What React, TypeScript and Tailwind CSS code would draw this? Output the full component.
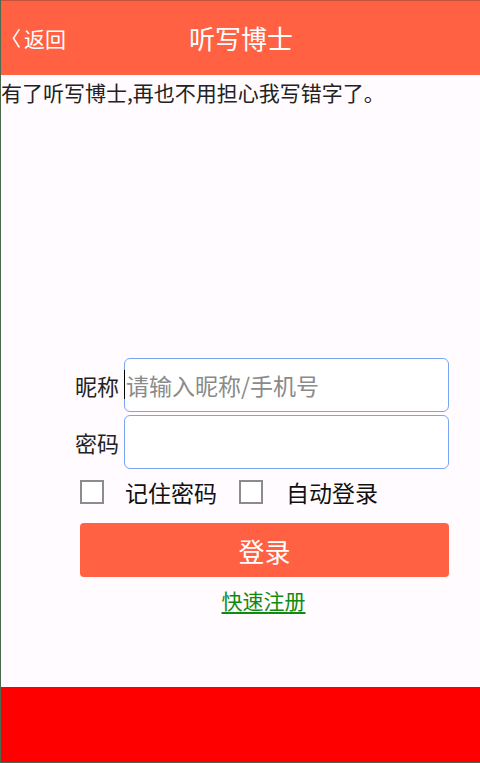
import React, { useState } from 'react'

const font = { fontFamily: '"Noto Sans CJK SC", "Noto Sans", sans-serif' }

const App = () => {
  const [remember, setRemember] = useState(false)
  const [autoLogin, setAutoLogin] = useState(false)

  return (
    <div style={font} className="w-[480px] h-[763px] flex flex-col bg-[#fffbfe] border-l border-b border-[#4b6a4b] overflow-hidden">
      {/* header */}
      <div className="relative h-[75px] shrink-0 flex items-center justify-center bg-[#ff6142] border-t border-[#c4533c]">
        <button className="absolute left-[0px] top-[23px] flex items-center text-white text-[21px] leading-[28px]">
          <span className="text-[20px] mr-[3px]">〈</span>返回
        </button>
        <h1 className="text-white text-[26px] leading-none pl-[1px]">听写博士</h1>
      </div>

      {/* content */}
      <div className="flex-1 flex flex-col">
        <p className="text-[21px] leading-[32px] text-[#222] pt-[1px]">
          有了听写博士,再也不用担心我写错字了。
        </p>

        <div className="ml-[74px] w-[374px] mt-[250px] flex flex-col">
          <div className="flex items-center">
            <label className="w-[49px] text-[22px] text-[#222] shrink-0">昵称</label>
            <div className="relative flex-1">
              <input
                className="w-full h-[54px] rounded-[6px] border border-[#79a3f3] bg-white pl-[1px] text-[23px] text-[#222] placeholder:text-[#8a8a8a] outline-none"
                placeholder="请输入昵称/手机号"
              />
              <span className="absolute left-[0px] top-[12px] w-[1px] h-[29px] bg-black" />
            </div>
          </div>
          <div className="flex items-center mt-[3px]">
            <label className="w-[49px] text-[22px] text-[#222] shrink-0">密码</label>
            <input
              type="password"
              className="flex-1 h-[54px] rounded-[6px] border border-[#79a3f3] bg-white px-[2px] text-[22px] outline-none"
            />
          </div>

          <div className="flex items-center mt-[10px] ml-[5px] h-[26px] text-[23px] text-[#111]">
            <button
              onClick={() => setRemember(!remember)}
              className="w-[24px] h-[24px] border-2 border-[#8c8c8c] bg-white flex items-center justify-center text-[16px]"
            >
              {remember ? '✓' : ''}
            </button>
            <span className="ml-[21px]">记住密码</span>
            <button
              onClick={() => setAutoLogin(!autoLogin)}
              className="ml-[22px] w-[24px] h-[24px] border-2 border-[#8c8c8c] bg-white flex items-center justify-center text-[16px]"
            >
              {autoLogin ? '✓' : ''}
            </button>
            <span className="ml-[23px]">自动登录</span>
          </div>

          <button className="mt-[18px] ml-[5px] h-[54px] rounded-[4px] bg-[#ff6142] text-white text-[26px]">
            登录
          </button>

          <a href="#" className="self-center ml-[3px] mt-[8px] text-[21px] leading-[30px] text-[#118a11] underline underline-offset-[3px]">
            快速注册
          </a>
        </div>
      </div>

      {/* footer */}
      <div className="h-[75px] shrink-0 bg-[#ff0000]" />
    </div>
  )
}

export default App
